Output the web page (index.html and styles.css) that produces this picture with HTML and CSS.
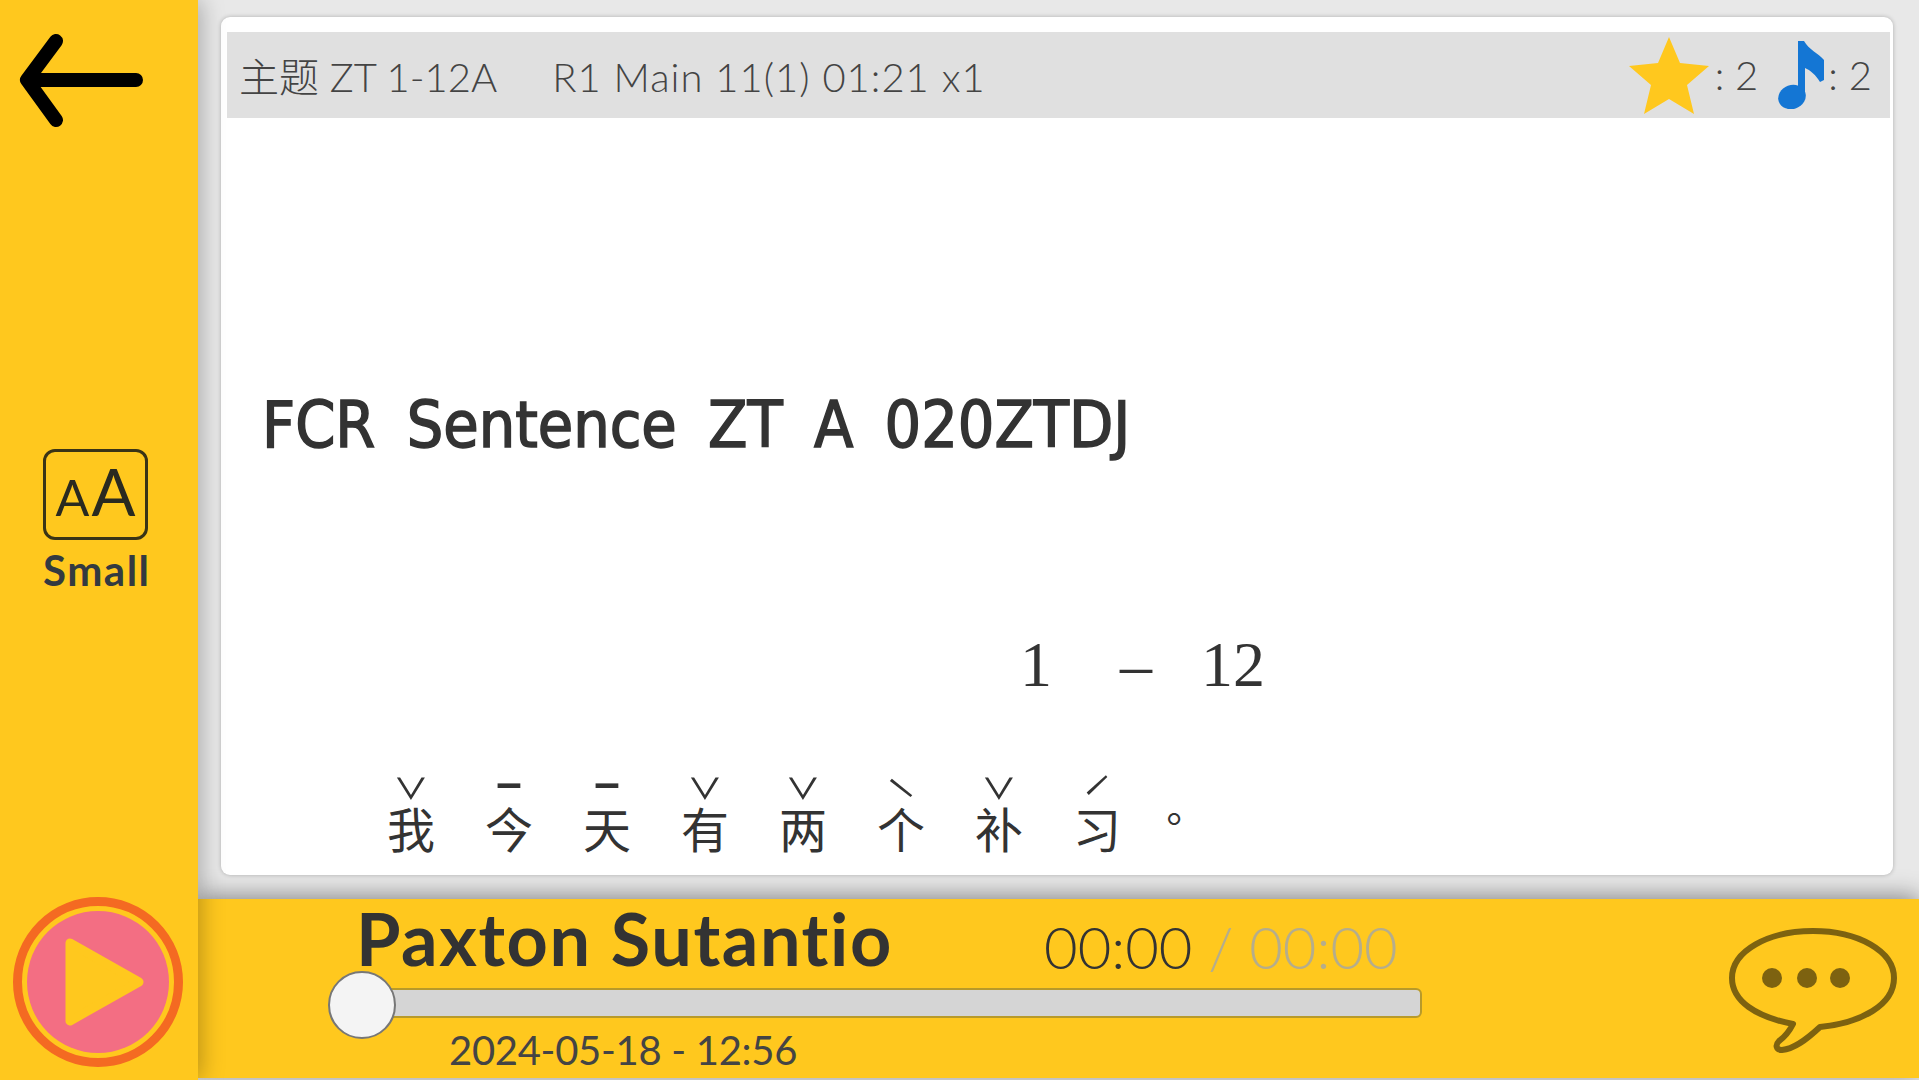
FILE: index.html
```html
<!DOCTYPE html>
<html lang="zh">
<head>
  <meta charset="UTF-8">
  <title>FCR Sentence</title>
  <link rel="stylesheet" href="styles.css">
</head>
<body>

<!-- Left Sidebar -->
<aside class="sidebar">
  <svg class="back-icon" viewBox="0 0 130 100" aria-label="Back">
    <path d="M38 9 L9 48 L38 88 M11 48 H118" fill="none" stroke="#000" stroke-width="14" stroke-linecap="round" stroke-linejoin="round"/>
  </svg>
  <div class="font-size">
    <div class="font-box"><span class="a-small">A</span><span class="a-big">A</span></div>
    <div class="font-label">Small</div>
  </div>
  <svg class="play-icon" viewBox="0 0 170 170" aria-label="Play">
    <circle cx="85" cy="85" r="80.5" fill="none" stroke="#f46a22" stroke-width="9"/>
    <circle cx="85" cy="85" r="71" fill="#f36e83"/>
    <path d="M57 46 L126 85 L57 124 Z" fill="#ffc81e" stroke="#ffc81e" stroke-width="9" stroke-linejoin="round"/>
  </svg>
</aside>

<div class="main">
  <!-- Sentence Card -->
  <section class="content">
    <div class="card">
      <div class="card-head">
        <div class="card-info">
          <span>主题 ZT 1-12A</span>
          <span class="card-round">R1 Main 11(1) 01:21 x1</span>
        </div>
        <div class="card-counts">
          <svg class="star-icon" viewBox="0 0 80 77"><polygon points="40,0 51,26 80,29 58,48 65,77 40,62 15,77 22,48 0,29 29,26" fill="#ffc81e"/></svg>
          <span class="count">: 2</span>
          <svg class="note-icon" viewBox="0 0 46 68"><ellipse cx="14" cy="56" rx="14" ry="12" transform="rotate(-20 14 56)" fill="#1476d4"/><path d="M20 0 H26 C31 9 40 12 46 19 V39 L42 41 C38 34 32 29 27 27 V58 H20 Z" fill="#1476d4"/></svg>
          <span class="count">: 2</span>
        </div>
      </div>
      <h1 class="title">FCR Sentence ZT A 020ZTDJ</h1>
      <div class="range">1 <span class="range-dash">–</span> 12</div>
      <div class="sentence">
        <div class="cell"><span class="tone">ˇ</span><span class="hanzi">我</span></div>
        <div class="cell"><span class="tone tone-flat">ˉ</span><span class="hanzi">今</span></div>
        <div class="cell"><span class="tone tone-flat">ˉ</span><span class="hanzi">天</span></div>
        <div class="cell"><span class="tone">ˇ</span><span class="hanzi">有</span></div>
        <div class="cell"><span class="tone">ˇ</span><span class="hanzi">两</span></div>
        <div class="cell"><span class="tone">ˋ</span><span class="hanzi">个</span></div>
        <div class="cell"><span class="tone">ˇ</span><span class="hanzi">补</span></div>
        <div class="cell"><span class="tone">ˊ</span><span class="hanzi">习</span></div>
        <div class="cell cell-stop"><span class="tone"></span><span class="hanzi stop">。</span></div>
      </div>
    </div>
  </section>

  <!-- Player Bar -->
  <footer class="player">
    <div class="player-info">
      <div class="player-top">
        <div class="name">Paxton Sutantio</div>
        <div class="time">00:00 <span class="time-total">/ 00:00</span></div>
      </div>
      <div class="track"><div class="thumb"></div></div>
      <div class="date">2024-05-18 - 12:56</div>
    </div>
    <svg class="chat-icon" viewBox="0 0 175 130" aria-label="Comments">
      <path d="M67 99 C30 92 6 76 6 53 C6 26 42 6 87 6 C132 6 168 26 168 53 C168 80 135 98 94 102 C80 115 68 124 56 125 C50 125 49 120 53 116 C60 111 64 105 67 99 Z" fill="none" stroke="#7d6210" stroke-width="6" stroke-linejoin="round"/>
      <circle cx="46" cy="53" r="10" fill="#7d6210"/>
      <circle cx="81" cy="53" r="10" fill="#7d6210"/>
      <circle cx="114" cy="53" r="10" fill="#7d6210"/>
    </svg>
  </footer>
</div>

</body>
</html>
```

FILE: styles.css
```css
/* General Styles */
html, body {
  margin: 0;
  height: 100%;
  overflow: hidden;
}
body {
  display: flex;
  background-color: #e8e8e8;
  font-family: Lato, "Noto Sans CJK SC", sans-serif;
  color: #333;
}

/* Sidebar */
.sidebar {
  position: relative;
  z-index: 3;
  width: 198px;
  flex-shrink: 0;
  display: flex;
  flex-direction: column;
  background-color: #ffc81e;
  box-shadow: 3px 0 22px rgba(0, 0, 0, 0.28);
}
.back-icon {
  width: 130px;
  height: 100px;
  margin: 32px 0 0 18px;
}
.font-size {
  margin: 317px 0 0 43px;
  width: 105px;
}
.font-box {
  box-sizing: border-box;
  width: 105px;
  height: 91px;
  display: flex;
  justify-content: center;
  align-items: baseline;
  gap: 2px;
  border: 3px solid #3a3416;
  border-radius: 12px;
  color: #2a2a20;
  font-weight: 400;
  line-height: 78px;
}
.a-small { font-size: 50px; }
.a-big { font-size: 65px; }
.font-label {
  margin-top: 6px;
  font-size: 42px;
  line-height: 48px;
  font-weight: 700;
  letter-spacing: 1.5px;
  text-align: center;
  white-space: nowrap;
  color: #333a40;
}
.play-icon {
  width: 170px;
  height: 170px;
  margin: auto 0 13px 13px;
}

/* Main Column */
.main {
  flex: 1;
  display: flex;
  flex-direction: column;
  min-width: 0;
}
.content {
  flex: 1;
  min-height: 0;
  padding: 17px 26px 24px 23px;
}
.card {
  position: relative;
  z-index: 2;
  box-sizing: border-box;
  height: 100%;
  padding-top: 15px;
  background: #fff;
  border-radius: 9px;
  box-shadow: 0 0 4px rgba(0, 0, 0, 0.25);
  overflow: hidden;
}
.card-head {
  height: 86px;
  margin: 0 3px 0 6px;
  padding: 0 18px 0 12px;
  display: flex;
  justify-content: space-between;
  align-items: center;
  background-color: #e0e0e0;
  font-size: 40px;
  font-weight: 300;
  color: #444;
}
.card-info {
  display: flex;
  align-items: baseline;
  gap: 55px;
}
.card-round {
  letter-spacing: 1px;
}
.card-counts {
  display: flex;
  align-items: center;
}
.star-icon {
  width: 80px;
  height: 77px;
  margin-right: 6px;
}
.note-icon {
  width: 46px;
  height: 68px;
  margin: 0 4px 0 20px;
}
.title {
  margin: 267px 0 0 41px;
  font-family: "DejaVu Sans", sans-serif;
  font-stretch: condensed;
  font-size: 64px;
  font-weight: 400;
  line-height: 80px;
  word-spacing: 13px;
  color: #333;
  -webkit-text-stroke: 1.5px #333;
}
.range {
  margin: 170px 0 0 799px;
  font-family: "Liberation Serif", serif;
  font-size: 64px;
  line-height: 60px;
  word-spacing: 44px;
  color: #333;
}
.range-dash {
  margin: 0 -11px 0 8px;
}
.sentence {
  display: flex;
  margin: 75px 0 0 141px;
}
.cell {
  width: 98px;
  display: flex;
  flex-direction: column;
  align-items: center;
  color: #333;
}
.cell-stop {
  width: 56px;
}
.tone {
  height: 30px;
  font-family: "Noto Sans CJK SC", sans-serif;
  font-size: 60px;
  font-weight: 300;
  line-height: 62px;
}
.tone-flat {
  font-weight: 900;
}
.hanzi {
  font-family: "Noto Sans CJK SC", sans-serif;
  font-size: 48px;
  font-weight: 400;
  line-height: 54px;
}
.stop {
  font-family: "Noto Sans CJK TC", sans-serif;
  font-size: 40px;
  line-height: 34px;
}

/* Player Bar */
.player {
  position: relative;
  z-index: 1;
  box-sizing: border-box;
  height: 179px;
  margin-bottom: 2px;
  padding: 0 18px 0 162px;
  display: flex;
  background-color: #ffc81e;
  box-shadow: 0 -3px 22px rgba(0, 0, 0, 0.42);
}
.player-info {
  width: 1062px;
}
.player-top {
  height: 89px;
  display: flex;
  align-items: center;
}
.name {
  width: 688px;
  margin: 0 0 12px -4px;
  font-size: 72px;
  font-weight: 700;
  line-height: 80px;
  letter-spacing: 1.6px;
  font-variant-ligatures: none;
  white-space: nowrap;
  color: #333;
}
.time {
  margin-top: 6px;
  font-size: 58px;
  font-weight: 300;
  line-height: 80px;
  color: #333;
}
.time-total {
  color: #b5ad8c;
}
.track {
  position: relative;
  box-sizing: border-box;
  height: 30px;
  background-color: #d5d5d5;
  border: 2px solid #b89a2a;
  border-radius: 6px;
}
.thumb {
  position: absolute;
  left: -34px;
  top: -19px;
  box-sizing: border-box;
  width: 68px;
  height: 68px;
  border-radius: 50%;
  background-color: #f4f4f4;
  border: 2px solid #777;
}
.date {
  margin: 6px 0 0 89px;
  font-size: 40px;
  font-weight: 400;
  line-height: 52px;
  letter-spacing: -0.3px;
  color: #444;
}
.chat-icon {
  width: 175px;
  height: 130px;
  margin: 26px 0 0 auto;
}
```
